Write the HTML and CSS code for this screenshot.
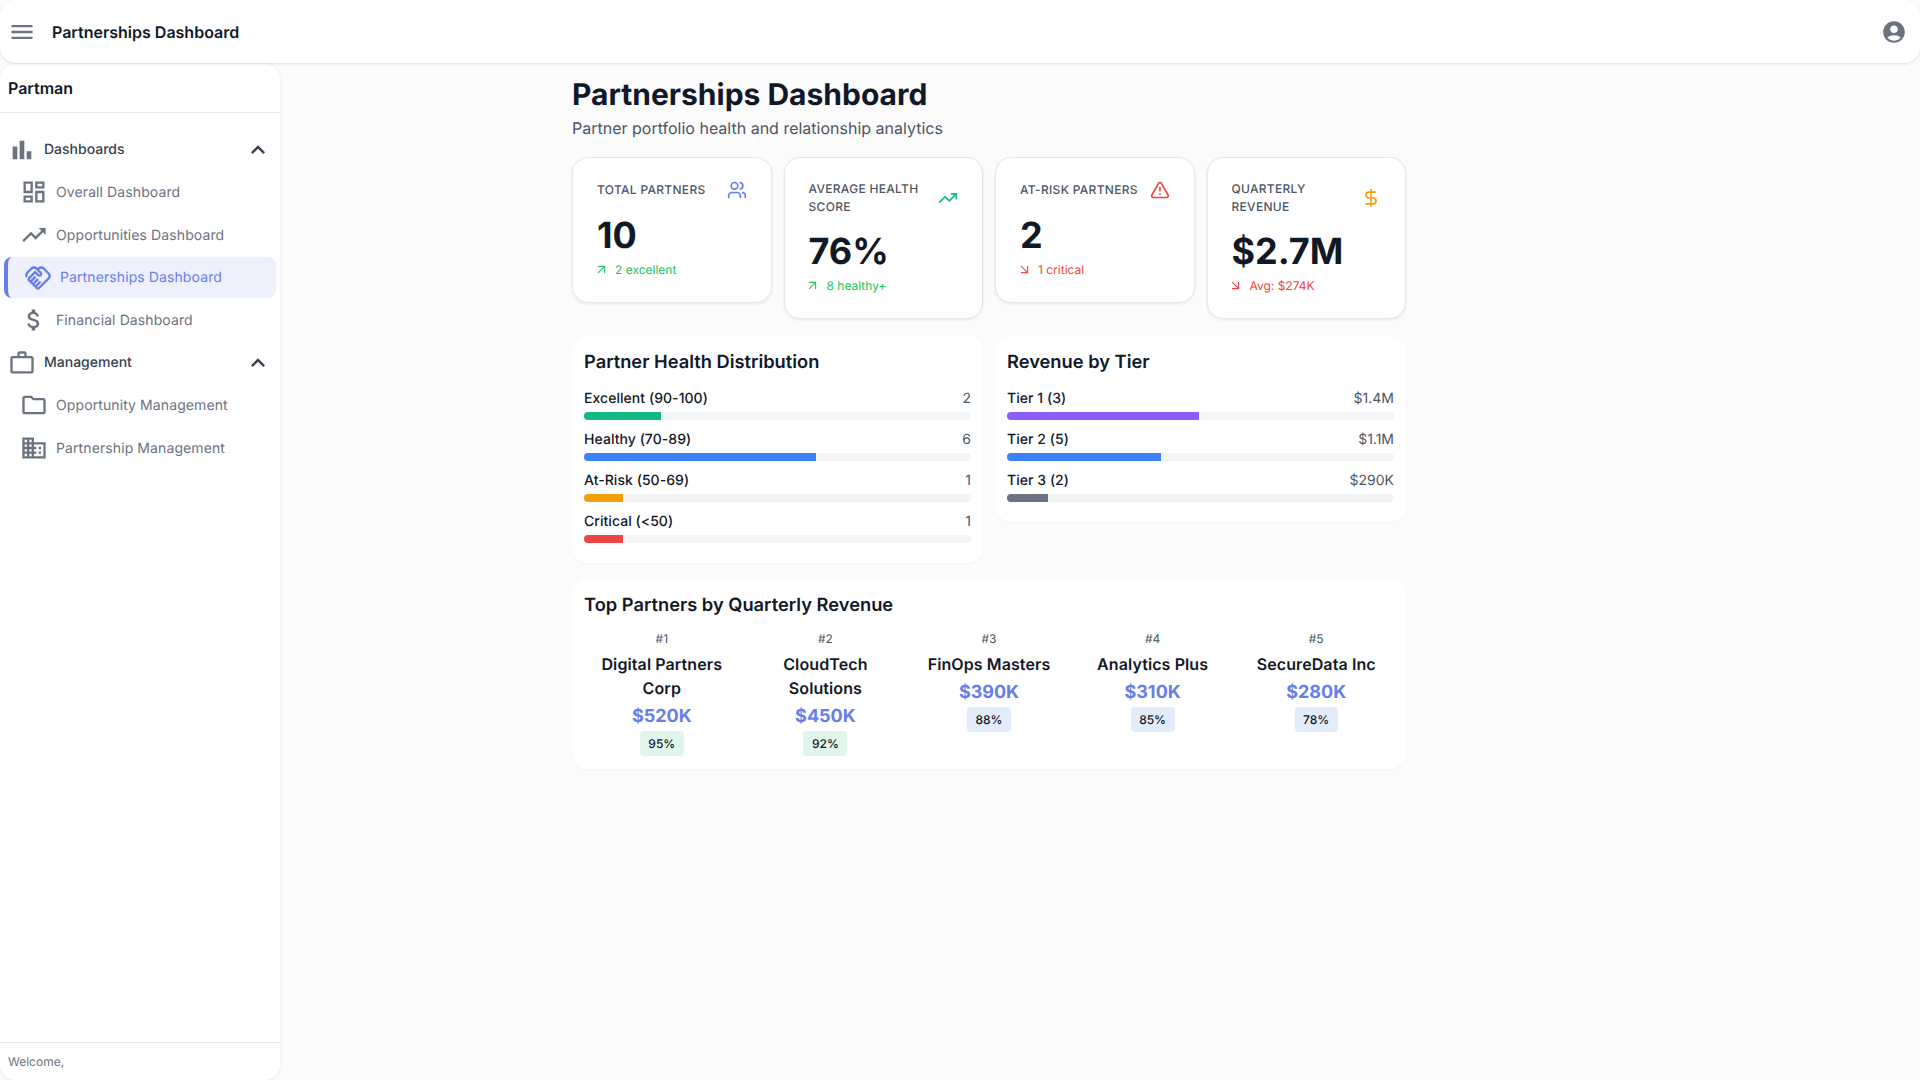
FILE: index.html
```html
<!DOCTYPE html>
<html lang="en">
<head>
<meta charset="utf-8">
<title>Partnerships Dashboard</title>
<link rel="stylesheet" href="styles.css">
</head>
<body>
<div class="app">
  <header class="topbar">
    <svg class="mi mi-menu" viewBox="0 0 24 24"><path d="M3 18h18v-2H3v2zm0-5h18v-2H3v2zm0-7v2h18V6H3z"/></svg>
    <span class="topbar-title">Partnerships Dashboard</span>
    <svg class="mi mi-account" viewBox="0 0 24 24"><path d="M12 2C6.48 2 2 6.48 2 12s4.48 10 10 10 10-4.48 10-10S17.52 2 12 2zm0 4c1.93 0 3.5 1.57 3.5 3.5S13.93 13 12 13s-3.5-1.57-3.5-3.5S10.07 6 12 6zm0 14c-2.03 0-4.43-.82-6.14-2.88C7.55 15.8 9.68 15 12 15s4.45.8 6.14 2.12C16.43 19.18 14.03 20 12 20z"/></svg>
  </header>
  <div class="body-row">
    <aside class="sidebar">
      <div class="side-head">Partman</div>
      <nav class="side-nav">
        <div class="group">
          <svg class="mi" viewBox="0 0 24 24"><path d="M4 9h4v11H4zm12 4h4v7h-4zm-6-9h4v16h-4z"/></svg>
          <span class="group-label">Dashboards</span>
          <svg class="mi chev" viewBox="0 0 24 24"><path d="M12 8l-6 6 1.41 1.41L12 10.83l4.59 4.58L18 14z"/></svg>
        </div>
        <a class="item">
          <svg class="mi" viewBox="0 0 24 24"><path d="M19 5v2h-4V5h4M9 5v6H5V5h4m10 8v6h-4v-6h4M9 17v2H5v-2h4M21 3h-8v6h8V3zM11 3H3v10h8V3zm10 8h-8v10h8V11zm-10 4H3v6h8v-6z"/></svg>
          <span>Overall Dashboard</span>
        </a>
        <a class="item">
          <svg class="mi" viewBox="0 0 24 24"><path d="M16 6l2.29 2.29-4.88 4.88-4-4L2 16.59 3.41 18l6-6 4 4 6.3-6.29L22 12V6z"/></svg>
          <span>Opportunities Dashboard</span>
        </a>
        <a class="item active">
          <svg class="mi" viewBox="0 0 24 24"><path d="M12.22 19.85c-.18.18-.5.21-.71 0-.18-.18-.21-.5 0-.71l3.39-3.39-1.41-1.41-3.39 3.39c-.19.2-.51.19-.71 0-.21-.21-.18-.53 0-.71l3.39-3.39-1.41-1.41-3.39 3.39c-.18.18-.5.21-.71 0-.19-.19-.19-.51 0-.71l3.39-3.39-1.42-1.41-3.39 3.39c-.18.18-.5.21-.71 0-.19-.2-.19-.51 0-.71L9.52 8.4l1.87 1.86c.95.95 2.59.94 3.54 0 .98-.98.98-2.56 0-3.54l-1.86-1.86.28-.28c.78-.78 2.05-.78 2.83 0l4.24 4.24c.78.78.78 2.05 0 2.83l-8.2 8.2zm9.61-6.78c1.56-1.56 1.56-4.09 0-5.66l-4.24-4.24c-1.56-1.56-4.09-1.56-5.66 0l-.28.28-.28-.28c-1.56-1.56-4.09-1.56-5.66 0L2.17 6.71c-1.42 1.42-1.55 3.63-.4 5.19l1.45-1.45c-.39-.75-.26-1.7.37-2.33l3.54-3.54c.78-.78 2.05-.78 2.83 0l3.56 3.56c.18.18.21.5 0 .71-.21.21-.53.18-.71 0L9.52 5.57l-5.8 5.79c-.98.97-.98 2.56 0 3.54.39.39.89.63 1.42.7.07.52.3 1.02.7 1.42.4.4.9.63 1.42.7.07.52.3 1.02.7 1.42.4.4.9.63 1.42.7.07.54.31 1.03.7 1.42.47.47 1.1.73 1.77.73.67 0 1.3-.26 1.77-.73l8.21-8.19z"/></svg>
          <span>Partnerships Dashboard</span>
        </a>
        <a class="item">
          <svg class="mi" viewBox="0 0 24 24"><path d="M11.8 10.9c-2.27-.59-3-1.2-3-2.15 0-1.09 1.01-1.85 2.7-1.85 1.78 0 2.44.85 2.5 2.1h2.21c-.07-1.72-1.12-3.3-3.21-3.81V3h-3v2.16c-1.94.42-3.5 1.68-3.5 3.61 0 2.31 1.91 3.46 4.7 4.13 2.5.6 3 1.48 3 2.41 0 .69-.49 1.79-2.7 1.79-2.06 0-2.87-.92-2.98-2.1h-2.2c.12 2.19 1.76 3.42 3.68 3.83V21h3v-2.15c1.95-.37 3.5-1.5 3.5-3.55 0-2.84-2.43-3.81-4.7-4.4z"/></svg>
          <span>Financial Dashboard</span>
        </a>
        <div class="group">
          <svg class="mi" viewBox="0 0 24 24"><path d="M14 6V4h-4v2h4zM4 8v11h16V8H4zm16-2c1.11 0 2 .89 2 2v11c0 1.11-.89 2-2 2H4c-1.11 0-2-.89-2-2l.01-11c0-1.11.88-2 1.99-2h4V4c0-1.11.89-2 2-2h4c1.11 0 2 .89 2 2v2h4z"/></svg>
          <span class="group-label">Management</span>
          <svg class="mi chev" viewBox="0 0 24 24"><path d="M12 8l-6 6 1.41 1.41L12 10.83l4.59 4.58L18 14z"/></svg>
        </div>
        <a class="item">
          <svg class="mi" viewBox="0 0 24 24"><path d="M9.17 6l2 2H20v10H4V6h5.17M10 4H4c-1.1 0-1.99.9-1.99 2L2 18c0 1.1.9 2 2 2h16c1.1 0 2-.9 2-2V8c0-1.1-.9-2-2-2h-8l-2-2z"/></svg>
          <span>Opportunity Management</span>
        </a>
        <a class="item">
          <svg class="mi" viewBox="0 0 24 24"><path d="M12 7V3H2v18h20V7H12zM6 19H4v-2h2v2zm0-4H4v-2h2v2zm0-4H4V9h2v2zm0-4H4V5h2v2zm4 12H8v-2h2v2zm0-4H8v-2h2v2zm0-4H8V9h2v2zm0-4H8V5h2v2zm10 12h-8v-2h2v-2h-2v-2h2v-2h-2V9h8v10zm-2-8h-2v2h2v-2zm0 4h-2v2h2v-2z"/></svg>
          <span>Partnership Management</span>
        </a>
      </nav>
      <div class="side-foot">Welcome,</div>
    </aside>
    <main class="main">
      <h1 class="page-title">Partnerships Dashboard</h1>
      <p class="page-sub">Partner portfolio health and relationship analytics</p>

      <section class="stats">
        <div class="stat">
          <div class="stat-head">
            <span class="stat-label">Total Partners</span>
            <svg class="lu c-indigo" viewBox="0 0 24 24"><path d="M16 21v-2a4 4 0 0 0-4-4H6a4 4 0 0 0-4 4v2"/><circle cx="9" cy="7" r="4"/><path d="M22 21v-2a4 4 0 0 0-3-3.87"/><path d="M16 3.13a4 4 0 0 1 0 7.75"/></svg>
          </div>
          <div class="stat-value">10</div>
          <div class="stat-delta up">
            <svg class="lu-sm" viewBox="0 0 24 24"><path d="M7 17 17 7"/><path d="M7 7h10v10"/></svg>
            <span>2 excellent</span>
          </div>
        </div>
        <div class="stat">
          <div class="stat-head">
            <span class="stat-label">Average Health Score</span>
            <svg class="lu c-emerald" viewBox="0 0 24 24"><path d="M22 7 13.5 15.5 8.5 10.5 2 17"/><path d="M16 7h6v6"/></svg>
          </div>
          <div class="stat-value">76%</div>
          <div class="stat-delta up">
            <svg class="lu-sm" viewBox="0 0 24 24"><path d="M7 17 17 7"/><path d="M7 7h10v10"/></svg>
            <span>8 healthy+</span>
          </div>
        </div>
        <div class="stat">
          <div class="stat-head">
            <span class="stat-label">At-Risk Partners</span>
            <svg class="lu c-red" viewBox="0 0 24 24"><path d="m21.73 18-8-14a2 2 0 0 0-3.48 0l-8 14A2 2 0 0 0 4 21h16a2 2 0 0 0 1.73-3"/><path d="M12 9v4"/><path d="M12 17h.01"/></svg>
          </div>
          <div class="stat-value">2</div>
          <div class="stat-delta down">
            <svg class="lu-sm" viewBox="0 0 24 24"><path d="m7 7 10 10"/><path d="M17 7v10H7"/></svg>
            <span>1 critical</span>
          </div>
        </div>
        <div class="stat">
          <div class="stat-head">
            <span class="stat-label">Quarterly Revenue</span>
            <svg class="lu c-amber" viewBox="0 0 24 24"><path d="M12 2v20"/><path d="M17 5H9.5a3.5 3.5 0 0 0 0 7h5a3.5 3.5 0 0 1 0 7H6"/></svg>
          </div>
          <div class="stat-value">$2.7M</div>
          <div class="stat-delta down">
            <svg class="lu-sm" viewBox="0 0 24 24"><path d="m7 7 10 10"/><path d="M17 7v10H7"/></svg>
            <span>Avg: $274K</span>
          </div>
        </div>
      </section>

      <section class="charts">
        <div class="panel">
          <h2 class="panel-title">Partner Health Distribution</h2>
          <div class="bar-row">
            <div class="bar-top"><span class="bar-name">Excellent (90-100)</span><span class="bar-num">2</span></div>
            <div class="track"><div class="fill f-green" style="width:20%"></div></div>
          </div>
          <div class="bar-row">
            <div class="bar-top"><span class="bar-name">Healthy (70-89)</span><span class="bar-num">6</span></div>
            <div class="track"><div class="fill f-blue" style="width:60%"></div></div>
          </div>
          <div class="bar-row">
            <div class="bar-top"><span class="bar-name">At-Risk (50-69)</span><span class="bar-num">1</span></div>
            <div class="track"><div class="fill f-amber" style="width:10%"></div></div>
          </div>
          <div class="bar-row">
            <div class="bar-top"><span class="bar-name">Critical (&lt;50)</span><span class="bar-num">1</span></div>
            <div class="track"><div class="fill f-red" style="width:10%"></div></div>
          </div>
        </div>
        <div class="panel">
          <h2 class="panel-title">Revenue by Tier</h2>
          <div class="bar-row">
            <div class="bar-top"><span class="bar-name">Tier 1 (3)</span><span class="bar-num">$1.4M</span></div>
            <div class="track"><div class="fill f-purple" style="width:49.7%"></div></div>
          </div>
          <div class="bar-row">
            <div class="bar-top"><span class="bar-name">Tier 2 (5)</span><span class="bar-num">$1.1M</span></div>
            <div class="track"><div class="fill f-blue" style="width:39.7%"></div></div>
          </div>
          <div class="bar-row">
            <div class="bar-top"><span class="bar-name">Tier 3 (2)</span><span class="bar-num">$290K</span></div>
            <div class="track"><div class="fill f-gray" style="width:10.6%"></div></div>
          </div>
        </div>
      </section>

      <section class="panel top-panel">
        <h2 class="panel-title">Top Partners by Quarterly Revenue</h2>
        <div class="partners">
          <div class="partner"><div class="rank">#1</div><div class="p-name">Digital Partners Corp</div><div class="p-value">$520K</div><span class="badge b-green">95%</span></div>
          <div class="partner"><div class="rank">#2</div><div class="p-name">CloudTech Solutions</div><div class="p-value">$450K</div><span class="badge b-green">92%</span></div>
          <div class="partner"><div class="rank">#3</div><div class="p-name">FinOps Masters</div><div class="p-value">$390K</div><span class="badge b-blue">88%</span></div>
          <div class="partner"><div class="rank">#4</div><div class="p-name">Analytics Plus</div><div class="p-value">$310K</div><span class="badge b-blue">85%</span></div>
          <div class="partner"><div class="rank">#5</div><div class="p-name">SecureData Inc</div><div class="p-value">$280K</div><span class="badge b-blue">78%</span></div>
        </div>
      </section>
    </main>
  </div>
</div>
</body>
</html>
```

FILE: styles.css
```css
* { box-sizing: border-box; }
html, body { margin: 0; height: 100%; }
body {
  font-family: Inter, "Liberation Sans", sans-serif;
  background: #fbfbfc;
  color: #111827;
  overflow: hidden;
  text-rendering: geometricPrecision;
}
.app { height: 1080px; display: flex; flex-direction: column; }

.mi { width: 28px; height: 28px; fill: #6b7280; flex: none; display: block; }

.topbar {
  height: 63px;
  flex: none;
  display: flex;
  align-items: center;
  padding: 0 13px 0 8px;
  background: #fff;
  border-radius: 16px;
  box-shadow: 0 1px 3px rgba(0,0,0,.12);
  position: relative;
  z-index: 2;
}
.topbar-title { margin-left: 16px; font-size: 16px; font-weight: 600; color: #111827; }
.mi-account { margin-left: auto; width: 26px; height: 26px; }

.body-row { flex: 1; display: flex; min-height: 0; padding-top: 1px; }

.sidebar {
  width: 280px;
  flex: none;
  display: flex;
  flex-direction: column;
  background: #fff;
  border-radius: 16px;
  box-shadow: 0 1px 4px rgba(0,0,0,.08);
}
.side-head {
  height: 49px;
  display: flex;
  align-items: center;
  padding: 0 8px;
  font-size: 16px;
  font-weight: 600;
  border-bottom: 1px solid #e5e7eb;
}
.side-nav { flex: 1; padding-top: 16.4px; display: flex; flex-direction: column; gap: 1.6px; }
.group {
  height: 41px;
  display: flex;
  align-items: center;
  gap: 8px;
  padding: 0 8px;
}
.group-label { flex: 1; font-size: 14px; font-weight: 500; color: #374151; }
.chev { fill: #374151; }
.item {
  height: 41px;
  margin: 0 4px;
  padding-left: 16px;
  display: flex;
  align-items: center;
  gap: 8px;
  font-size: 14px;
  letter-spacing: .1px;
  color: #6b7280;
  border-radius: 8px;
}
.item.active {
  background: #eef0fc;
  color: #667eea;
  border-left: 4px solid #667eea;
}
.item.active .mi { fill: #667eea; }
.side-foot {
  height: 38px;
  padding: 0 8px;
  display: flex;
  align-items: center;
  font-size: 12px;
  color: #6b7280;
  border-top: 1px solid #e5e7eb;
}

.main { width: 834px; margin-left: 292px; padding-top: 13px; }
.page-title { margin: 0; font-size: 30px; line-height: 36px; font-weight: 700; color: #111827; }
.page-sub { margin: 2.5px 0 0; font-size: 16px; line-height: 24px; color: #4b5563; }

.stats {
  margin-top: 17.5px;
  display: grid;
  grid-template-columns: repeat(4, 1fr);
  gap: 12px;
  align-items: start;
}
.stat {
  background: #fff;
  border: 1px solid #e5e7eb;
  border-radius: 16px;
  padding: 22.4px 24px 23.4px;
  box-shadow: 0 1px 3px rgba(0,0,0,.08);
}
.stat-head { display: flex; align-items: center; justify-content: space-between; gap: 8px; }
.stat-label {
  font-size: 12px;
  line-height: 18px;
  font-weight: 500;
  letter-spacing: .3px;
  text-transform: uppercase;
  color: #4b5563;
}
.lu {
  width: 20px; height: 20px; flex: none; display: block;
  fill: none; stroke: currentColor; stroke-width: 2; stroke-linecap: round; stroke-linejoin: round;
}
.c-indigo { color: #667eea; }
.c-emerald { color: #10b981; }
.c-red { color: #ef4444; }
.c-amber { color: #f59e0b; }
.stat-value { margin-top: 14px; font-size: 36px; line-height: 43.2px; font-weight: 700; color: #111827; }
.stat-delta { margin-top: 3px; display: flex; align-items: center; gap: 6.5px; font-size: 12px; line-height: 18px; }
.up { color: #22c55e; }
.down { color: #ef4444; }
.lu-sm {
  width: 15px; height: 15px; margin-left: -3.5px; flex: none; display: block;
  fill: none; stroke: currentColor; stroke-width: 1.8; stroke-linecap: round; stroke-linejoin: round;
}

.charts {
  margin-top: 17px;
  display: grid;
  grid-template-columns: 1fr 1fr;
  gap: 12px;
  align-items: start;
}
.panel {
  background: #fff;
  border-radius: 16px;
  padding: 12px;
  box-shadow: 0 1px 2px rgba(0,0,0,.03);
}
.charts .panel { padding-bottom: 11px; }
.panel-title { margin: 0 0 13px; padding-top: 1px; font-size: 18.3px; line-height: 26px; font-weight: 600; color: #111827; }
.bar-row { margin-bottom: 9px; }
.bar-top { display: flex; justify-content: space-between; font-size: 14px; line-height: 21px; }
.bar-name { font-weight: 500; letter-spacing: .05px; color: #111827; }
.bar-num { color: #4b5563; }
.track { margin-top: 3px; height: 8px; border-radius: 4px; background: #f3f4f6; overflow: hidden; }
.fill { height: 100%; }
.f-green { background: #10b981; }
.f-blue { background: #3b82f6; }
.f-amber { background: #f59e0b; }
.f-red { background: #ef4444; }
.f-purple { background: #8b5cf6; }
.f-gray { background: #6b7280; }

.top-panel { margin-top: 16px; padding-bottom: 12.5px; }
.partners { margin-top: -1px; display: grid; grid-template-columns: repeat(5, 1fr); gap: 8px; }
.partner { display: flex; flex-direction: column; align-items: center; text-align: center; padding: 0 8px; }
.rank { font-size: 12px; line-height: 18px; color: #4b5563; }
.p-name { margin-top: 4px; font-size: 16px; line-height: 24px; font-weight: 600; letter-spacing: .1px; color: #111827; }
.p-value { margin-top: 3.5px; font-size: 18px; line-height: 27px; font-weight: 700; color: #667eea; }
.badge { margin-top: .5px; padding: 4px 8.5px; border-radius: 4px; font-size: 12px; line-height: 17.4px; font-weight: 500; color: #111827; }
.b-green { background: #e0f5ec; }
.b-blue { background: #e3ecfb; }
```
